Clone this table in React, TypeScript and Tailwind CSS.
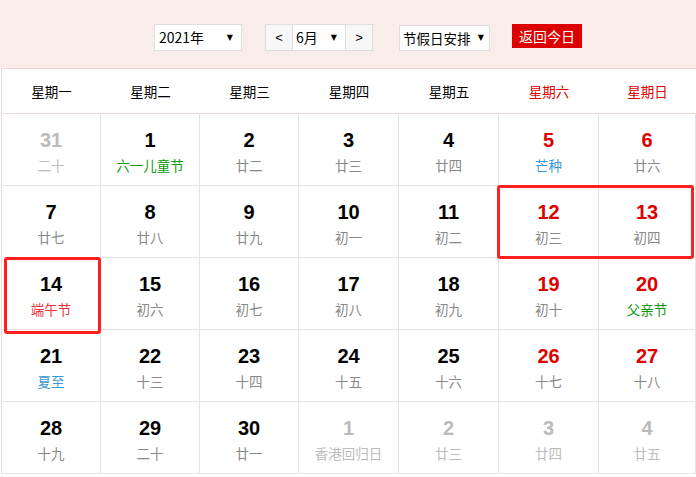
import React from "react";

type Cell = { d: number; l: string; kind?: "term" | "fest" | "duanwu"; out?: boolean; wk?: boolean };

const rows: Cell[][] = [
  [
    { d: 31, l: "二十", out: true },
    { d: 1, l: "六一儿童节", kind: "fest" },
    { d: 2, l: "廿二" },
    { d: 3, l: "廿三" },
    { d: 4, l: "廿四" },
    { d: 5, l: "芒种", kind: "term", wk: true },
    { d: 6, l: "廿六", wk: true },
  ],
  [
    { d: 7, l: "廿七" },
    { d: 8, l: "廿八" },
    { d: 9, l: "廿九" },
    { d: 10, l: "初一" },
    { d: 11, l: "初二" },
    { d: 12, l: "初三", wk: true },
    { d: 13, l: "初四", wk: true },
  ],
  [
    { d: 14, l: "端午节", kind: "duanwu" },
    { d: 15, l: "初六" },
    { d: 16, l: "初七" },
    { d: 17, l: "初八" },
    { d: 18, l: "初九" },
    { d: 19, l: "初十", wk: true },
    { d: 20, l: "父亲节", kind: "fest", wk: true },
  ],
  [
    { d: 21, l: "夏至", kind: "term" },
    { d: 22, l: "十三" },
    { d: 23, l: "十四" },
    { d: 24, l: "十五" },
    { d: 25, l: "十六" },
    { d: 26, l: "十七", wk: true },
    { d: 27, l: "十八", wk: true },
  ],
  [
    { d: 28, l: "十九" },
    { d: 29, l: "二十" },
    { d: 30, l: "廿一" },
    { d: 1, l: "香港回归日", out: true },
    { d: 2, l: "廿三", out: true },
    { d: 3, l: "廿四", out: true },
    { d: 4, l: "廿五", out: true },
  ],
];

const weekdays = ["星期一", "星期二", "星期三", "星期四", "星期五", "星期六", "星期日"];

const cjk = { fontFamily: '"Noto Sans CJK SC", "Liberation Sans", sans-serif' };
const num = { fontFamily: '"Liberation Sans", Arial, sans-serif' };

function lunarColor(c: Cell) {
  if (c.out) return "text-[#bbbbbb]";
  if (c.kind === "term") return "text-[#3b98d4]";
  if (c.kind === "fest") return "text-[#0a9a0a]";
  if (c.kind === "duanwu") return "text-[#e5323c]";
  return "text-[#888888]";
}

function numColor(c: Cell) {
  if (c.out) return "text-[#bbbbbb]";
  if (c.wk) return "text-[#dd0000]";
  return "text-black";
}

function Arrow() {
  return <span className="text-[8px] leading-none" style={{ fontFamily: '"DejaVu Sans", sans-serif' }}>▼</span>;
}

export default function App() {
  return (
    <div className="relative w-[696px] h-[477px] overflow-hidden bg-white">
      <div className="h-[68px] bg-[#f9ecea] flex items-start pl-[154px] pt-[24px] text-[14px] text-black" style={cjk}>
        <div className="w-[88px] h-[27px] bg-white border border-[#dddddd] flex items-center justify-between pl-[4px] pr-[8px]">
          <span>2021年</span>
          <Arrow />
        </div>
        <div className="ml-[23px] w-[108px] h-[27px] bg-white border border-[#dddddd] flex">
          <div className="w-[27px] bg-[#f7f7f7] border-r border-[#dddddd] flex items-center justify-center text-[13px]" style={num}>&lt;</div>
          <div className="flex-1 flex items-center justify-between pl-[3px] pr-[8px]">
            <span>6月</span>
            <Arrow />
          </div>
          <div className="w-[27px] bg-[#f7f7f7] border-l border-[#dddddd] flex items-center justify-center text-[13px]" style={num}>&gt;</div>
        </div>
        <div className="ml-[26px] mt-[1px] w-[91px] h-[26px] bg-white border border-[#dddddd] flex items-center justify-between pl-[3px] pr-[5px]">
          <span className="text-[13.5px]">节假日安排</span>
          <Arrow />
        </div>
        <div className="ml-[22px] w-[70px] h-[24px] bg-[#dd0000] text-white text-[14px] flex items-center justify-center">返回今日</div>
      </div>

      <div className="ml-[1px] border-l border-[#f3d6d6]">
        <div className="grid grid-cols-[99px_99px_99px_100px_100px_100px_1fr] h-[46px] border-t border-b border-[#f3d6d6]" style={cjk}>
          {weekdays.map((w, i) => (
            <div key={w} className={`flex items-center justify-center text-[13.5px] ${i >= 5 ? "text-[#dd0000]" : "text-black"}`}>{w}</div>
          ))}
        </div>
        {rows.map((r, ri) => (
          <div key={ri} className="grid grid-cols-[99px_99px_99px_100px_100px_100px_1fr] h-[72px]">
            {r.map((c, ci) => (
              <div key={ci} className="border-r border-b border-[#e3e3e3] flex flex-col items-center pt-[14px]">
                <div className={`text-[20px] font-bold leading-[24px] ${numColor(c)}`} style={num}>{c.d}</div>
                <div className={`mt-[5px] text-[13.5px] leading-[16px] ${lunarColor(c)}`} style={cjk}>{c.l}</div>
              </div>
            ))}
          </div>
        ))}
      </div>

      <div className="absolute left-[497px] top-[185px] w-[197px] h-[74px] border-[3px] border-[#ff1f1f] rounded-[3px]" />
      <div className="absolute left-[4px] top-[257px] w-[97px] h-[77px] border-[3px] border-[#ff1f1f] rounded-[3px]" />
    </div>
  );
}
